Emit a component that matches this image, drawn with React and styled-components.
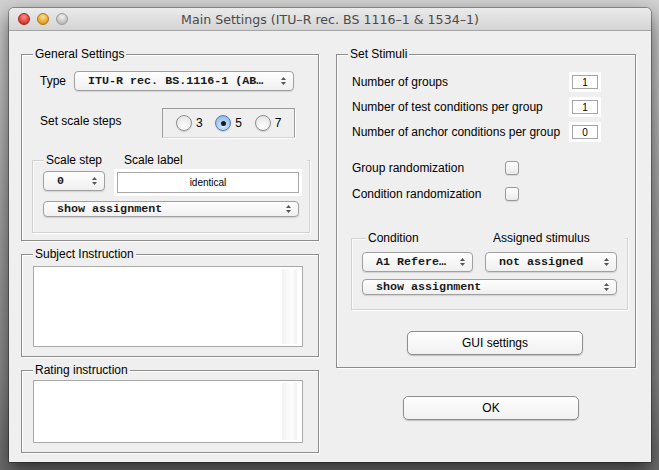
import React from 'react'
import styled, { createGlobalStyle } from 'styled-components'

const GlobalStyle = createGlobalStyle`
  html, body { margin: 0; padding: 0; }
  body {
    width: 659px;
    height: 470px;
    overflow: hidden;
    background: linear-gradient(#d2d2d2, #a4a4a4 45%, #8a8a8a 80%, #6c6c6c);
    font-family: "Liberation Sans", Arial, sans-serif;
    font-size: 12px;
    color: #000;
  }
`

const Window = styled.div`
  margin: 8px 0 0 9px;
  width: 642px;
  height: 454px;
  background: #efefef;
  border-radius: 5px 5px 0 0;
  box-shadow: 0 0 0 1px rgba(0, 0, 0, 0.3), 0 8px 20px rgba(0, 0, 0, 0.6);
  display: flex;
  flex-direction: column;
  overflow: hidden;
`

const TitleBar = styled.div`
  height: 22px;
  flex: none;
  display: grid;
  grid-template-columns: 1fr auto 1fr;
  align-items: center;
  background: linear-gradient(#ebebeb, #d4d4d4);
  border-bottom: 1px solid #a3a3a3;
`

const Lights = styled.div`
  display: flex;
  gap: 7px;
  padding-left: 9px;
`

const Light = styled.span`
  width: 12px;
  height: 12px;
  border-radius: 50%;
  box-sizing: border-box;
  border: 1px solid ${p => p.$edge};
  background: radial-gradient(circle at 50% 30%, ${p => p.$hi}, ${p => p.$lo} 75%);
`

const Title = styled.div`
  font-family: "DejaVu Sans", sans-serif;
  font-size: 12.6px;
  color: #4a4a4a;
  white-space: nowrap;
`

const Body = styled.div`
  flex: 1;
  display: flex;
  gap: 17px;
  padding: 23px 15px 0 12px;
`

const Column = styled.div`
  width: ${p => p.$w}px;
  display: flex;
  flex-direction: column;
  align-items: stretch;
`

const Group = styled.div`
  box-sizing: border-box;
  height: ${p => p.$h}px;
  margin-top: ${p => p.$mt || 0}px;
  border: 1px solid #8c8c8c;
  box-shadow: inset 1px 1px 0 #fff, 1px 1px 0 #fff;
  display: flex;
  flex-direction: column;
`

const Legend = styled.div`
  align-self: flex-start;
  margin: -8px 0 0 11px;
  padding: 0 2px;
  line-height: 14px;
  background: #efefef;
`

const SubPanel = styled.div`
  box-sizing: border-box;
  height: ${p => p.$h}px;
  margin-top: ${p => p.$mt}px;
  border: 1px solid #d2d2d2;
  box-shadow: inset 1px 1px 0 #fafafa, 1px 1px 0 #fff;
  display: flex;
  flex-direction: column;
`

const SubLegend = styled.div`
  display: grid;
  grid-template-columns: ${p => p.$col}px 1fr;
  margin: -8px 2px 0 ${p => p.$ml}px;
  padding: 0 2px;
  line-height: 14px;
  background: #efefef;
`

const GeneralBody = styled.div`
  display: flex;
  flex-direction: column;
  padding: 10px 8px 0 10px;
`

const Row = styled.div`
  display: flex;
  align-items: center;
  height: ${p => p.$h}px;
  margin-top: ${p => p.$mt || 0}px;
  padding: 0 16px 0 8px;
`

const TypeLabel = styled.span`
  width: 34px;
  flex: none;
`

const StepsLabel = styled.span`
  flex: 1;
  margin-bottom: 4px;
`

const PopupBox = styled.div`
  box-sizing: border-box;
  display: flex;
  align-items: center;
  height: 20px;
  width: ${p => (p.$w ? `${p.$w}px` : 'auto')};
  flex: ${p => (p.$w ? 'none' : '1')};
  padding: 0 6px 0 13px;
  border: 1px solid #a0a0a0;
  border-radius: 4px;
  background: linear-gradient(#fefefe, #f0f0f0);
  box-shadow: 0 1px 1px rgba(0, 0, 0, 0.12);
  font-family: "Liberation Mono", "Courier New", monospace;
  font-size: 11.7px;
  font-weight: bold;
  color: #1a1a1a;
  white-space: nowrap;
  margin-top: ${p => p.$mt || 0}px;
`

const PopupText = styled.span`
  flex: 1;
  overflow: hidden;
`

const Arrows = () => (
  <svg width="7" height="10" viewBox="0 0 7 10">
    <path d="M1 4 L3.5 1 L6 4 Z" fill="#555" />
    <path d="M1 6 L3.5 9 L6 6 Z" fill="#555" />
  </svg>
)

const Popup = ({ width, mt, children }) => (
  <PopupBox $w={width} $mt={mt}>
    <PopupText>{children}</PopupText>
    <Arrows />
  </PopupBox>
)

const RadioBox = styled.div`
  box-sizing: border-box;
  width: 133px;
  height: 30px;
  margin-right: -1px;
  display: flex;
  align-items: center;
  padding-left: 13px;
  border: 1px solid #9b9b9b;
  border-bottom-color: #d4d4d4;
  box-shadow: 1px 1px 0 #fff;
`

const RadioItem = styled.label`
  width: 40px;
  display: flex;
  align-items: center;
  gap: 4px;
  font-size: 12px;
`

const RadioCircle = styled.span`
  box-sizing: border-box;
  width: 16px;
  height: 16px;
  border-radius: 50%;
  display: flex;
  align-items: center;
  justify-content: center;
  border: 1px solid ${p => (p.$on ? '#5a7eaa' : '#8e8e8e')};
  background: ${p =>
    p.$on
      ? 'radial-gradient(circle at 50% 70%, #d8ebfd, #8dbbec 80%)'
      : 'radial-gradient(circle at 50% 75%, #ffffff, #e4e4e4 85%)'};
  box-shadow: 0 1px 1px rgba(0, 0, 0, 0.15);

  &::after {
    content: '';
    display: ${p => (p.$on ? 'block' : 'none')};
    width: 5px;
    height: 5px;
    border-radius: 50%;
    background: #1b1b1b;
  }
`

const Radio = ({ on, label }) => (
  <RadioItem>
    <RadioCircle $on={on} />
    {label}
  </RadioItem>
)

const ScaleBody = styled.div`
  display: flex;
  flex-direction: column;
  padding: 2px 10px 0 10px;
`

const SpinRow = styled.div`
  display: flex;
  align-items: flex-start;
  gap: 9px;
  height: 27px;
`

const FieldFrame = styled.div`
  flex: 1;
  margin-right: -3px;
  padding: 3px;
  background: #fff;
  display: flex;
`

const Field = styled.div`
  flex: 1;
  height: 21px;
  box-sizing: border-box;
  border: 1px solid #a8a8a8;
  background: #fff;
  display: flex;
  align-items: center;
  justify-content: center;
  font-size: 10px;
`

const TextBody = styled.div`
  display: flex;
  padding: ${p => p.$pt}px 15px 0 11px;
`

const TextArea = styled.div`
  flex: 1;
  box-sizing: border-box;
  height: ${p => p.$h}px;
  border: 1px solid #a9a9a9;
  background: #fff;
  display: flex;
  justify-content: flex-end;
  padding: 2px 5px 2px 0;
`

const ScrollTrack = styled.div`
  width: 15px;
  background: linear-gradient(to right, #f1f1f1, #fafafa 40%, #fefefe 65%, #f0f0f0);
`

const StimBody = styled.div`
  display: flex;
  flex-direction: column;
  padding: 11px 7px 0 14px;
`

const NumRow = styled.div`
  display: flex;
  align-items: center;
  height: 20px;
  padding-left: 1px;
  margin-top: ${p => p.$mt || 0}px;
`

const NumFrame = styled.div`
  margin: 0 27px 0 auto;
  padding: 3px;
  background: #fff;
`

const NumBox = styled.div`
  box-sizing: border-box;
  width: 26px;
  height: 14px;
  border: 1px solid #a5a5a5;
  display: flex;
  align-items: center;
  justify-content: center;
  font-size: 10px;
`

const CheckRow = styled.div`
  display: grid;
  grid-template-columns: 153px auto;
  align-items: center;
  height: 20px;
  margin-top: ${p => p.$mt}px;
  padding-left: 1px;
`

const CheckBox = styled.span`
  box-sizing: border-box;
  width: 14px;
  height: 14px;
  border: 1px solid #9a9a9a;
  border-radius: 3px;
  background: linear-gradient(#ffffff, #eaeaea);
  box-shadow: 0 1px 1px rgba(0, 0, 0, 0.1);
`

const CondBody = styled.div`
  display: flex;
  flex-direction: column;
  padding: 7px 10px 0 10px;
`

const PopRow = styled.div`
  display: flex;
  gap: 12px;
`

const PushButton = styled.button`
  box-sizing: border-box;
  align-self: flex-start;
  width: 176px;
  height: 24px;
  margin: ${p => p.$mt}px 0 0 ${p => p.$ml}px;
  border: 1px solid #8e8e8e;
  border-radius: 5px;
  background: linear-gradient(#fefefe, #f1f1f1);
  box-shadow: 0 1px 1px rgba(0, 0, 0, 0.2);
  font-family: "Liberation Sans", Arial, sans-serif;
  font-size: 12px;
  color: #000;
  padding: 0;
`

export default function App() {
  return (
    <>
      <GlobalStyle />
      <Window>
        <TitleBar>
          <Lights>
            <Light $hi="#ff8f88" $lo="#d3342b" $edge="#a3211b" />
            <Light $hi="#ffe08a" $lo="#e09a24" $edge="#ad7417" />
            <Light $hi="#f2f2f2" $lo="#b9b9b9" $edge="#9a9a9a" />
          </Lights>
          <Title>Main Settings (ITU–R rec. BS 1116–1 &amp; 1534–1)</Title>
          <span />
        </TitleBar>
        <Body>
          <Column $w={298}>
            <Group $h={187}>
              <Legend>General Settings</Legend>
              <GeneralBody>
                <Row $h={20}>
                  <TypeLabel>Type</TypeLabel>
                  <Popup>ITU-R rec. BS.1116-1 (AB…</Popup>
                </Row>
                <Row $h={30} $mt={17}>
                  <StepsLabel>Set scale steps</StepsLabel>
                  <RadioBox>
                    <Radio label="3" />
                    <Radio on label="5" />
                    <Radio label="7" />
                  </RadioBox>
                </Row>
                <SubPanel $h={73} $mt={22}>
                  <SubLegend $col={78} $ml={11}>
                    <span>Scale step</span>
                    <span>Scale label</span>
                  </SubLegend>
                  <ScaleBody>
                    <SpinRow>
                      <PopupBox $w={62} $mt={2}>
                        <PopupText>0</PopupText>
                        <Arrows />
                      </PopupBox>
                      <FieldFrame>
                        <Field>identical</Field>
                      </FieldFrame>
                    </SpinRow>
                    <Popup mt={5}>show assignment</Popup>
                  </ScaleBody>
                </SubPanel>
              </GeneralBody>
            </Group>

            <Group $h={103} $mt={13}>
              <Legend>Subject Instruction</Legend>
              <TextBody $pt={5}>
                <TextArea $h={81}>
                  <ScrollTrack />
                </TextArea>
              </TextBody>
            </Group>

            <Group $h={83} $mt={13}>
              <Legend>Rating instruction</Legend>
              <TextBody $pt={3}>
                <TextArea $h={63}>
                  <ScrollTrack />
                </TextArea>
              </TextBody>
            </Group>
          </Column>

          <Column $w={300}>
            <Group $h={314}>
              <Legend>Set Stimuli</Legend>
              <StimBody>
                <NumRow>
                  Number of groups
                  <NumFrame><NumBox>1</NumBox></NumFrame>
                </NumRow>
                <NumRow $mt={5}>
                  Number of test conditions per group
                  <NumFrame><NumBox>1</NumBox></NumFrame>
                </NumRow>
                <NumRow $mt={5}>
                  Number of anchor conditions per group
                  <NumFrame><NumBox>0</NumBox></NumFrame>
                </NumRow>
                <CheckRow $mt={16}>
                  <span>Group randomization</span>
                  <CheckBox />
                </CheckRow>
                <CheckRow $mt={6}>
                  <span>Condition randomization</span>
                  <CheckBox />
                </CheckRow>
                <SubPanel $h={72} $mt={34}>
                  <SubLegend $col={125} $ml={14}>
                    <span>Condition</span>
                    <span>Assigned stimulus</span>
                  </SubLegend>
                  <CondBody>
                    <PopRow>
                      <Popup width={111}>A1 Refere…</Popup>
                      <Popup>not assigned</Popup>
                    </PopRow>
                    <Popup mt={7}>show assignment</Popup>
                  </CondBody>
                </SubPanel>
                <PushButton $mt={21} $ml={56}>GUI settings</PushButton>
              </StimBody>
            </Group>
            <PushButton $mt={28} $ml={67}>OK</PushButton>
          </Column>
        </Body>
      </Window>
    </>
  )
}
